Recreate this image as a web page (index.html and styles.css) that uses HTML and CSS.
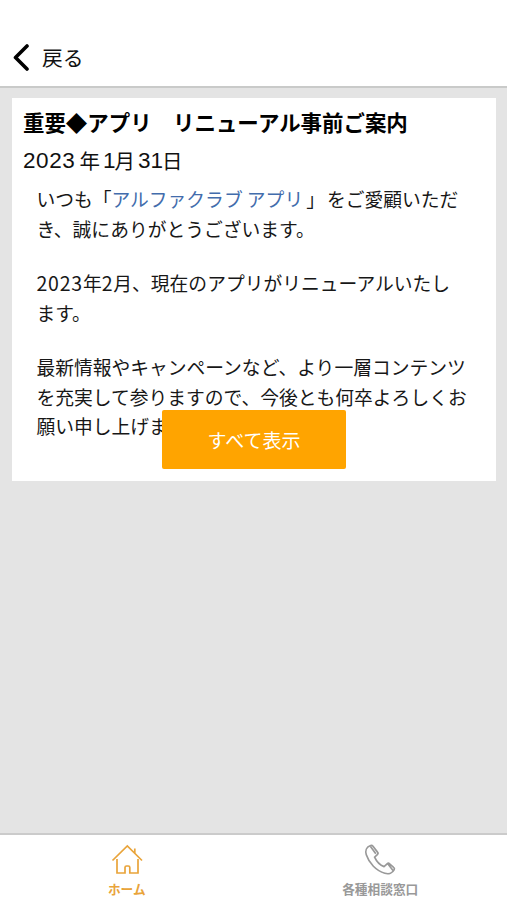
FILE: index.html
```html
<!DOCTYPE html>
<html lang="ja">
<head>
<meta charset="utf-8">
<title>お知らせ</title>
<link rel="stylesheet" href="styles.css">
</head>
<body>
<header class="header">
  <svg class="chevron" width="18" height="28" viewBox="0 0 18 28"><path d="M16 3 4.500 14.500 16 26" /></svg>
  <span class="back">戻る</span>
</header>
<main class="main">
  <article class="card">
    <h1 class="title">重要◆アプリ　リニューアル事前ご案内</h1>
    <div class="date"><span class="year">2023</span><span>年</span><span class="month">1</span><span>月</span><span class="day">31</span><span>日</span></div>
    <div class="body">
      <p>いつも「<a class="link">アルファクラブ アプリ</a>」<span class="after">をご愛顧いただ</span><br>き、誠にありがとうございます。</p>
      <p><span class="num">2023</span>年<span class="num">2</span>月、現在のアプリがリニューアルいたし<br>ます。</p>
      <p>最新情報やキャンペーンなど、より一層コンテンツ<br>を充実して参りますので、今後とも何卒よろしくお<br>願い申し上げます。</p>
    </div>
    <button class="show-all">すべて表示</button>
  </article>
</main>
<nav class="tabs">
  <div class="tab active">
    <svg width="34" height="34" viewBox="0 0 34 34"><path d="M2.500 18.500 17.300 4l14.700 14.500M24.800 11V6.500M7 17v14h8v-5.500q0-1.500 1.500-1.500h1.800q1.500 0 1.500 1.500V31H28V17" /></svg>
    <span>ホーム</span>
  </div>
  <div class="tab">
    <svg width="34" height="34" viewBox="0 0 34 34"><path d="M7 3.800C3.500 5.200 2 8.800 3.300 12.800 6 21.200 13.300 28.800 21.800 31.300c4 1.200 7.800-.3 9.400-3.600.5-1 .2-1.700-.6-2.300l-4-3.600c-.8-.7-1.700-.7-2.500 0l-3 2.800c-4-1.500-7.500-5-9.500-9.500l2.700-2.500c.8-.7.9-1.700.2-2.500L10 4.200c-.8-.9-1.700-1-3-.4zM7.500 4.500l5.300 7.200M24.800 21.700l5 6.500" /></svg>
    <span>各種相談窓口</span>
  </div>
</nav>
</body>
</html>
```
FILE: styles.css
```css
* { box-sizing: border-box; }
body {
  margin: 0;
  height: 900px;
  display: flex;
  flex-direction: column;
  overflow: hidden;
  background: #e4e4e4;
  color: #000;
  font-family: "Noto Sans CJK JP", sans-serif;
}
.header {
  height: 88px;
  flex: none;
  padding: 28px 0 0 11px;
  display: flex;
  align-items: center;
  gap: 13px;
  background: #fff;
  border-bottom: 2px solid #c9cac9;
}
.chevron { fill: none; stroke: #000; stroke-width: 3.6; stroke-linecap: round; stroke-linejoin: round; }
.back { color: #111; font-size: 20.8px; line-height: 30px; }
.main { flex: 1; padding: 10px 11px 0 12px; }
.card {
  position: relative;
  height: 383px;
  padding: 8px 11px 0;
  background: #fff;
}
.title { margin: 0; font-size: 21.45px; line-height: 32px; font-weight: 700; white-space: nowrap; }
.date {
  display: flex;
  margin-top: 7px;
  color: #111;
  font-size: 20.5px;
  line-height: 30px;
  white-space: nowrap;
}
.year, .month, .day { font-family: "Liberation Sans", sans-serif; font-size: 22.5px; line-height: 32px; }
.year { letter-spacing: .6px; margin-right: 4px; }
.month { margin: 0 -1px 0 3px; }
.day { margin: 0 -1px 0 3px; }
.body { margin: 7.4px 0 0 13.4px; color: #171717; font-size: 18.78px; line-height: 29.6px; white-space: nowrap; }
.body p { margin: 0 0 24.6px; }
.num { font-size: 19.5px; line-height: 1; letter-spacing: .8px; }
.link { color: #426cac; margin-right: 3px; }
.after { margin-left: 2px; }
.show-all {
  position: absolute;
  left: 150px;
  top: 312px;
  width: 184px;
  height: 59px;
  padding: 0;
  border: 0;
  border-radius: 2px;
  background: #ffa400;
  color: #fff;
  font: 19px/57px "Noto Sans CJK JP", sans-serif;
}
.tabs {
  flex: none;
  height: 67px;
  display: flex;
  background: #fff;
  border-top: 2px solid #cbcbcb;
}
.tab {
  flex: 1;
  display: flex;
  flex-direction: column;
  align-items: center;
  padding-top: 7px;
  color: #999;
  font-size: 12.7px;
  line-height: 20px;
  font-weight: 700;
}
.tab svg { fill: none; stroke: currentColor; stroke-width: 1.7; }
.tab span { margin-top: 3px; }
.tab.active { color: #e9a43a; }
```
